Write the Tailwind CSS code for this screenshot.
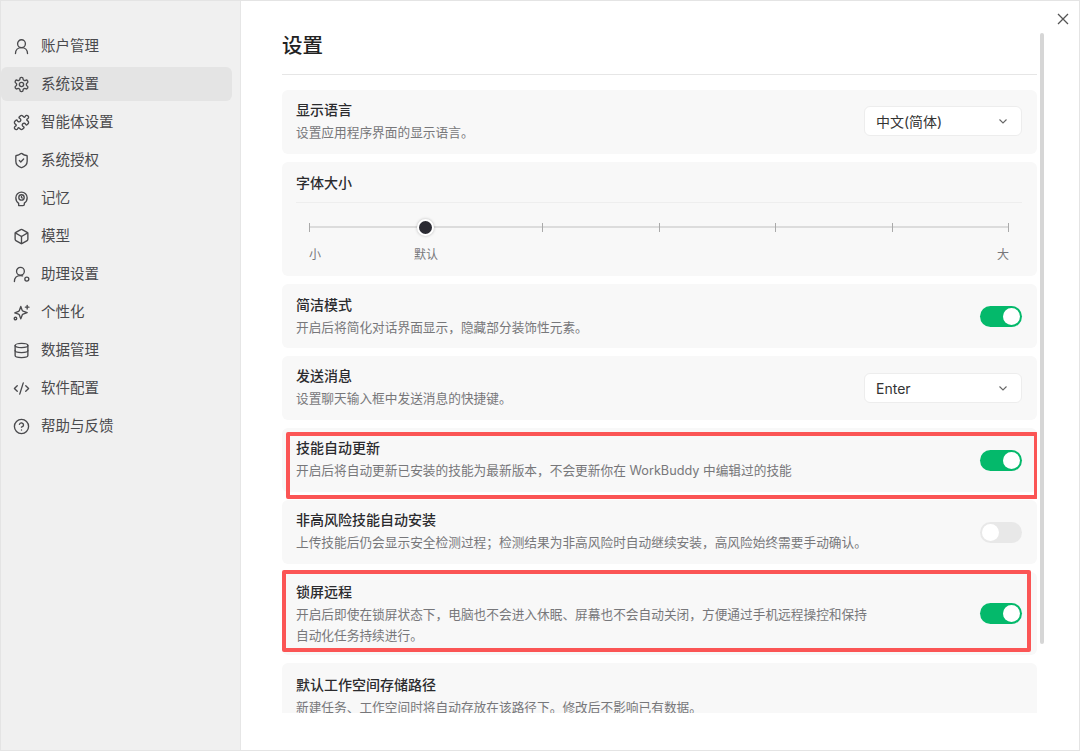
<!DOCTYPE html>
<html lang="zh-CN">
<head>
<meta charset="UTF-8">
<title>设置</title>
<script src="https://cdn.jsdelivr.net/npm/@tailwindcss/browser@4"></script>
</head>
<body class="bg-white">
<div class="relative flex h-[751px] w-[1080px] overflow-hidden border border-[#e4e4e4] bg-white font-['Inter','Noto_Sans_CJK_SC',sans-serif] text-[#2b2b2e]">

  <!-- sidebar -->
  <nav class="flex w-[240px] shrink-0 flex-col gap-1 border-r border-[#e6e6e6] bg-[#f0f0f0] pt-[28px] pr-[8px] text-[14.5px] text-[#4a4a4d]">
    <a class="flex h-[34px] items-center gap-[11px] rounded-md pl-[12px]">
      <svg class="h-[17px] w-[17px]" viewBox="0 0 24 24" fill="none" stroke="currentColor" stroke-width="1.900" stroke-linecap="round" stroke-linejoin="round"><circle cx="12" cy="8" r="5.500"/><path d="M3.500 22c0-5 3.500-8.500 8.500-8.500s8.500 3.500 8.500 8.500"/></svg><span>账户管理</span></a>
    <a class="flex h-[34px] items-center gap-[11px] rounded-md bg-[#e4e4e4] pl-[12px]">
      <svg class="h-[17px] w-[17px]" viewBox="0 0 24 24" fill="none" stroke="currentColor" stroke-width="1.900" stroke-linecap="round" stroke-linejoin="round"><path d="M12.220 2h-.44a2 2 0 0 0-2 2v.18a2 2 0 0 1-1 1.730l-.43.25a2 2 0 0 1-2 0l-.15-.08a2 2 0 0 0-2.730.73l-.22.38a2 2 0 0 0 .73 2.730l.15.1a2 2 0 0 1 1 1.720v.51a2 2 0 0 1-1 1.740l-.15.09a2 2 0 0 0-.73 2.730l.22.38a2 2 0 0 0 2.730.73l.15-.08a2 2 0 0 1 2 0l.43.25a2 2 0 0 1 1 1.730V20a2 2 0 0 0 2 2h.44a2 2 0 0 0 2-2v-.18a2 2 0 0 1 1-1.730l.43-.25a2 2 0 0 1 2 0l.15.08a2 2 0 0 0 2.730-.73l.22-.39a2 2 0 0 0-.73-2.730l-.15-.08a2 2 0 0 1-1-1.740v-.5a2 2 0 0 1 1-1.740l.15-.09a2 2 0 0 0 .73-2.730l-.22-.38a2 2 0 0 0-2.730-.73l-.15.08a2 2 0 0 1-2 0l-.43-.25a2 2 0 0 1-1-1.730V4a2 2 0 0 0-2-2z"/><circle cx="12" cy="12" r="3"/></svg><span>系统设置</span></a>
    <a class="flex h-[34px] items-center gap-[11px] rounded-md pl-[12px]">
      <svg class="h-[17px] w-[17px]" viewBox="0 0 24 24" fill="none" stroke="currentColor" stroke-width="1.900" stroke-linecap="round" stroke-linejoin="round"><path d="M19.439 7.850c-.049.322.059.648.289.878l1.568 1.568c.47.47.706 1.087.706 1.704s-.235 1.233-.706 1.704l-1.611 1.611a.98.98 0 0 1-.837.276c-.47-.07-.802-.48-.968-.925a2.501 2.501 0 1 0-3.214 3.214c.446.166.855.497.925.968a.979.979 0 0 1-.276.837l-1.610 1.610a2.404 2.404 0 0 1-1.705.707 2.402 2.402 0 0 1-1.704-.706l-1.568-1.568a1.026 1.026 0 0 0-.877-.29c-.493.074-.84.504-1.020.968a2.500 2.500 0 1 1-3.237-3.237c.464-.18.894-.527.967-1.020a1.026 1.026 0 0 0-.289-.877l-1.568-1.568A2.402 2.402 0 0 1 1.998 12c0-.617.236-1.234.706-1.704L4.230 8.770c.24-.24.581-.353.917-.303.515.077.877.528 1.073 1.010a2.500 2.500 0 1 0 3.259-3.259c-.482-.196-.933-.558-1.010-1.073-.05-.336.062-.676.303-.917l1.525-1.525A2.402 2.402 0 0 1 12 1.998c.617 0 1.234.236 1.704.706l1.568 1.568c.23.23.556.338.877.29.493-.074.84-.504 1.020-.968a2.500 2.500 0 1 1 3.237 3.237c-.464.18-.894.527-.967 1.020Z"/></svg><span>智能体设置</span></a>
    <a class="flex h-[34px] items-center gap-[11px] rounded-md pl-[12px]">
      <svg class="h-[17px] w-[17px]" viewBox="0 0 24 24" fill="none" stroke="currentColor" stroke-width="1.900" stroke-linecap="round" stroke-linejoin="round"><path d="M20 13c0 5-3.500 7.500-7.660 8.950a1 1 0 0 1-.67-.01C7.500 20.500 4 18 4 13V6a1 1 0 0 1 1-1c2 0 4.500-1.200 6.240-2.720a1.170 1.170 0 0 1 1.520 0C14.510 3.810 17 5 19 5a1 1 0 0 1 1 1z"/><path d="m9 12 2 2 4-4"/></svg><span>系统授权</span></a>
    <a class="flex h-[34px] items-center gap-[11px] rounded-md pl-[12px]">
      <svg class="h-[17px] w-[17px]" viewBox="0 0 24 24" fill="none" stroke="currentColor" stroke-width="1.900" stroke-linecap="round" stroke-linejoin="round"><path d="M8 22v-3.200C5.500 17.200 4 14.200 4 11a8 8 0 0 1 16 0c0 3.500-1.500 6-4 7.500V20a2 2 0 0 1-2 2z"/><circle cx="12" cy="10.500" r="3.800"/><path d="M12 9v1.500l1 .8"/></svg><span>记忆</span></a>
    <a class="flex h-[34px] items-center gap-[11px] rounded-md pl-[12px]">
      <svg class="h-[17px] w-[17px]" viewBox="0 0 24 24" fill="none" stroke="currentColor" stroke-width="1.900" stroke-linecap="round" stroke-linejoin="round"><path d="M21 8a2 2 0 0 0-1-1.730l-7-4a2 2 0 0 0-2 0l-7 4A2 2 0 0 0 3 8v8a2 2 0 0 0 1 1.730l7 4a2 2 0 0 0 2 0l7-4A2 2 0 0 0 21 16Z"/><path d="m3.300 7 8.700 5 8.700-5"/><path d="M12 22V12"/></svg><span>模型</span></a>
    <a class="flex h-[34px] items-center gap-[11px] rounded-md pl-[12px]">
      <svg class="h-[17px] w-[17px]" viewBox="0 0 24 24" fill="none" stroke="currentColor" stroke-width="1.900" stroke-linecap="round" stroke-linejoin="round"><circle cx="10.500" cy="7.500" r="5.500"/><path d="M2 22c0-5 3-8.500 8.500-8.500 1 0 2 .1 3 .5"/><circle cx="19.500" cy="18.500" r="2.800"/></svg><span>助理设置</span></a>
    <a class="flex h-[34px] items-center gap-[11px] rounded-md pl-[12px]">
      <svg class="h-[17px] w-[17px]" viewBox="0 0 24 24" fill="none" stroke="currentColor" stroke-width="1.900" stroke-linecap="round" stroke-linejoin="round"><path d="M11 3.500l2 5.500a2 2 0 0 0 1.200 1.200l5.800 2-5.800 2.100A2 2 0 0 0 13 15.500L11 21l-2-5.500a2 2 0 0 0-1.200-1.200L2.500 12.500l5.300-2.100A2 2 0 0 0 9 9.200z"/><path d="M20 2v5"/><path d="M17.500 4.500h5"/><circle cx="3.500" cy="20.500" r="1.800"/></svg><span>个性化</span></a>
    <a class="flex h-[34px] items-center gap-[11px] rounded-md pl-[12px]">
      <svg class="h-[17px] w-[17px]" viewBox="0 0 24 24" fill="none" stroke="currentColor" stroke-width="1.900" stroke-linecap="round" stroke-linejoin="round"><ellipse cx="12" cy="5" rx="9" ry="3"/><path d="M3 5V19A9 3 0 0 0 21 19V5"/><path d="M3 12A9 3 0 0 0 21 12"/></svg><span>数据管理</span></a>
    <a class="flex h-[34px] items-center gap-[11px] rounded-md pl-[12px]">
      <svg class="h-[17px] w-[17px]" viewBox="0 0 24 24" fill="none" stroke="currentColor" stroke-width="1.900" stroke-linecap="round" stroke-linejoin="round"><path d="m18 16 4-4-4-4"/><path d="m6 8-4 4 4 4"/><path d="m14.500 4-5 16"/></svg><span>软件配置</span></a>
    <a class="flex h-[34px] items-center gap-[11px] rounded-md pl-[12px]">
      <svg class="h-[17px] w-[17px]" viewBox="0 0 24 24" fill="none" stroke="currentColor" stroke-width="1.900" stroke-linecap="round" stroke-linejoin="round"><circle cx="12" cy="12" r="10"/><path d="M9.090 9a3 3 0 0 1 5.830 1c0 2-3 3-3 3"/><path d="M12 17h.01"/></svg><span>帮助与反馈</span></a>
  </nav>

  <!-- main -->
  <main class="relative flex min-w-0 flex-1 flex-col pl-[41px]">
    <svg class="absolute top-[11px] right-[9px] h-[14px] w-[14px] text-[#555]" viewBox="0 0 14 14" fill="none" stroke="currentColor" stroke-width="1.300"><path d="M2 2l10 10M12 2L2 12"/></svg>
    <div class="absolute top-[32px] right-[35px] h-[611px] w-[4px] rounded-full bg-[#d6d6d6]"></div>

    <h1 class="flex h-[74px] w-[755px] shrink-0 items-center border-b border-[#e6e6e6] pt-[18px] text-[20.500px] font-medium text-[#222]">设置</h1>

    <div class="relative mt-[15px] flex h-[623px] w-[755px] flex-col gap-2 overflow-hidden">
      <section class="flex h-[64px] shrink-0 items-center justify-between rounded-md bg-[#f8f8f8] pr-[15px] pl-[14px]">
        <div class="mb-[2px]">
          <h2 class="mb-[2px] text-[14px] leading-[20px] font-medium">显示语言</h2>
          <p class="text-[12.700px] leading-[21px] text-[#77777a]">设置应用程序界面的显示语言。</p>
        </div>
        <button class="mb-[2px] flex h-[30px] w-[158px] items-center justify-between rounded-md border border-[#ededed] bg-white px-[11px] text-[14px] text-[#333]">中文(简体)
          <svg class="mr-[1px] h-[12px] w-[12px] text-[#666]" viewBox="0 0 12 12" fill="none" stroke="currentColor" stroke-width="1.100"><path d="M2.500 4.500L6 8l3.500-3.500"/></svg>
        </button>
      </section>

      <section class="h-[114px] shrink-0 rounded-md bg-[#f8f8f8] pr-[15px] pl-[14px]">
        <h2 class="flex h-[41px] items-center border-b border-[#eeeeee] text-[14px] font-medium">字体大小</h2>
        <div class="mx-[13px] mt-[23px] flex h-[2px] items-center justify-between bg-[#dcdcdc]">
          <i class="h-[9px] w-[1px] bg-[#aaa]"></i>
          <i class="relative h-[9px] w-[1px]"><b class="absolute top-[-4px] left-[-9px] h-[17px] w-[17px] rounded-full border-[2px] border-white bg-[#2b2b33] shadow-[0_0_3px_rgba(0,0,0,0.25)]"></b></i>
          <i class="h-[9px] w-[1px] bg-[#aaa]"></i><i class="h-[9px] w-[1px] bg-[#aaa]"></i><i class="h-[9px] w-[1px] bg-[#aaa]"></i><i class="h-[9px] w-[1px] bg-[#aaa]"></i><i class="h-[9px] w-[1px] bg-[#aaa]"></i>
        </div>
        <div class="mx-[13px] mt-[18px] flex text-[12px] leading-[18px] text-[#77777a]">
          <span class="w-[105px]">小</span><span>默认</span><span class="ml-auto">大</span>
        </div>
      </section>

      <section class="flex h-[64px] shrink-0 items-center justify-between rounded-md bg-[#f8f8f8] pr-[15px] pl-[14px]">
        <div>
          <h2 class="mb-[2px] text-[14px] leading-[20px] font-medium">简洁模式</h2>
          <p class="text-[12.700px] leading-[21px] text-[#77777a]">开启后将简化对话界面显示，隐藏部分装饰性元素。</p>
        </div>
        <span class="flex h-[21px] w-[42px] items-center justify-end rounded-full bg-[#04b96b] px-[2px]"><i class="h-[17px] w-[17px] rounded-full bg-white"></i></span>
      </section>

      <section class="flex h-[64px] shrink-0 items-center justify-between rounded-md bg-[#f8f8f8] pr-[15px] pl-[14px]">
        <div class="mb-[2px]">
          <h2 class="mb-[2px] text-[14px] leading-[20px] font-medium">发送消息</h2>
          <p class="text-[12.700px] leading-[21px] text-[#77777a]">设置聊天输入框中发送消息的快捷键。</p>
        </div>
        <button class="flex h-[30px] w-[158px] items-center justify-between rounded-md border border-[#ededed] bg-white px-[11px] text-[14px] text-[#333]">Enter
          <svg class="mr-[1px] h-[12px] w-[12px] text-[#666]" viewBox="0 0 12 12" fill="none" stroke="currentColor" stroke-width="1.100"><path d="M2.500 4.500L6 8l3.500-3.500"/></svg>
        </button>
      </section>

      <section class="flex h-[64px] shrink-0 items-center justify-between rounded-md bg-[#f8f8f8] pr-[15px] pl-[14px]">
        <div class="mb-[2px]">
          <h2 class="mb-[2px] text-[14px] leading-[20px] font-medium">技能自动更新</h2>
          <p class="text-[12.700px] leading-[21px] text-[#77777a]">开启后将自动更新已安装的技能为最新版本，不会更新你在 WorkBuddy 中编辑过的技能</p>
        </div>
        <span class="flex h-[21px] w-[42px] items-center justify-end rounded-full bg-[#04b96b] px-[2px]"><i class="h-[17px] w-[17px] rounded-full bg-white"></i></span>
      </section>

      <section class="flex h-[64px] shrink-0 items-center justify-between rounded-md bg-[#f8f8f8] pr-[15px] pl-[14px]">
        <div class="mb-[2px]">
          <h2 class="mb-[2px] text-[14px] leading-[20px] font-medium">非高风险技能自动安装</h2>
          <p class="text-[12.700px] leading-[21px] text-[#77777a]">上传技能后仍会显示安全检测过程；检测结果为非高风险时自动继续安装，高风险始终需要手动确认。</p>
        </div>
        <span class="flex h-[21px] w-[42px] items-center justify-start rounded-full bg-[#e8e8e8] px-[2px]"><i class="h-[17px] w-[17px] rounded-full bg-white"></i></span>
      </section>

      <section class="flex h-[83px] shrink-0 items-center justify-between rounded-md bg-[#f8f8f8] pr-[15px] pl-[14px]">
        <div class="w-[576px]">
          <h2 class="mb-[2px] text-[14px] leading-[20px] font-medium">锁屏远程</h2>
          <p class="text-[12.700px] leading-[21px] text-[#77777a]">开启后即使在锁屏状态下，电脑也不会进入休眠、屏幕也不会自动关闭，方便通过手机远程操控和保持自动化任务持续进行。</p>
        </div>
        <span class="flex h-[21px] w-[42px] items-center justify-end rounded-full bg-[#04b96b] px-[2px]"><i class="h-[17px] w-[17px] rounded-full bg-white"></i></span>
      </section>

      <section class="flex h-[64px] shrink-0 items-center justify-between rounded-md bg-[#f8f8f8] pr-[15px] pl-[14px]">
        <div class="pt-[2px]">
          <h2 class="mb-[2px] text-[14px] leading-[20px] font-medium">默认工作空间存储路径</h2>
          <p class="text-[12.700px] leading-[21px] text-[#77777a]">新建任务、工作空间时将自动存放在该路径下。修改后不影响已有数据。</p>
        </div>
      </section>

      <!-- red annotation boxes drawn over the screenshot -->
      <div class="absolute top-[342px] left-[4px] h-[67px] w-[752px] rounded-[2px] border-[4px] border-[#fb5555]"></div>
      <div class="absolute top-[480px] left-0 h-[82px] w-[749px] rounded-[2px] border-[4px] border-[#fb5555]"></div>
    </div>
  </main>
</div>
</body>
</html>
